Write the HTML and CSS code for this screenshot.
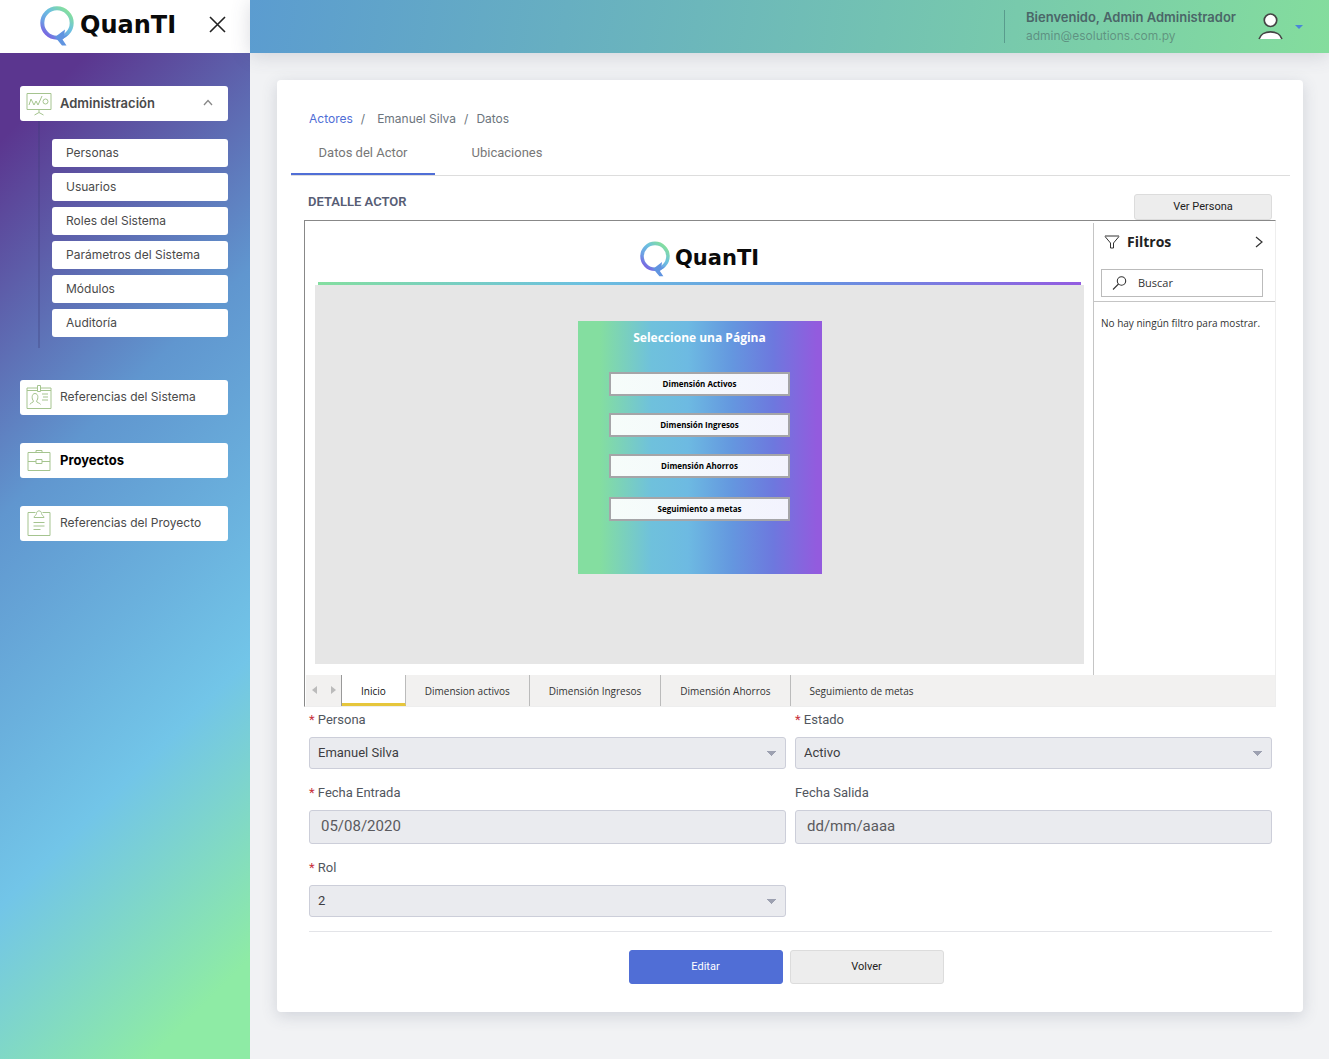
FILE: index.html
```html
<!DOCTYPE html>
<html lang="es">
<head>
<meta charset="utf-8">
<meta name="viewport" content="width=device-width, initial-scale=1">
<title>QuanTI - Datos del Actor</title>
<link rel="stylesheet" href="styles.css">
</head>
<body>
<svg class="defs" aria-hidden="true">
  <defs>
    <linearGradient id="ring" x1="0.1" y1="0.95" x2="0.85" y2="0.1">
      <stop offset="0" stop-color="#7a5be0"/>
      <stop offset="0.3" stop-color="#6c9fe4"/>
      <stop offset="0.65" stop-color="#6cc0e0"/>
      <stop offset="1" stop-color="#84dea0"/>
    </linearGradient>
    <symbol id="logo-q" viewBox="0 0 34 40">
      <circle cx="17" cy="17" r="14.7" fill="none" stroke="url(#ring)" stroke-width="4"/>
      <path d="M15 31 25 23.500 24 30 28.500 28.500 22.500 33.500 26.500 39.500 22 39.500Z" fill="#6094e0"/>
    </symbol>
  </defs>
</svg>
<div class="app">
  <aside class="sidebar">
    <div class="brand">
      <span class="logo"><svg class="logo-mark" aria-hidden="true"><use href="#logo-q"/></svg><span>QuanTI</span></span>
      <button class="close" type="button" aria-label="Cerrar menú">
        <svg width="17" height="17" viewBox="0 0 17 17" fill="none" stroke="#222" stroke-width="1.6"><path d="M1 1 16 16M16 1 1 16"/></svg>
      </button>
    </div>
    <nav class="menu" aria-label="Principal">
      <section class="group">
        <button class="item open" type="button" aria-expanded="true">
          <svg class="icon" viewBox="0 0 26 26"><path d="M1 3.500h24v16H1zM3 15 5 9l3 6 2-4 2 4 4-9M13 20v2.500M8.500 25l4.500-2.500L17.500 25"/><circle cx="19.500" cy="11.500" r="2.500"/></svg>
          <span>Administración</span>
          <svg class="chevron" width="10" height="7" viewBox="0 0 10 7" fill="none" stroke="#888" stroke-width="1.300"><path d="M1 6 5 1.500 9 6"/></svg>
        </button>
        <ul class="submenu">
          <li><a href="#">Personas</a></li>
          <li><a href="#">Usuarios</a></li>
          <li><a href="#">Roles del Sistema</a></li>
          <li><a href="#">Parámetros del Sistema</a></li>
          <li><a href="#">Módulos</a></li>
          <li><a href="#">Auditoría</a></li>
        </ul>
      </section>
      <a class="item" href="#">
        <svg class="icon" viewBox="0 0 26 26"><path d="M11.500 4H1v20.500h24V4H14.500M1 6.500h10.500M14.500 6.500H25M11.500 1.500h3v6h-3zM16 10h6M17 13h5M16 16h6M4 20.500c0-2 3.500-1.500 3.500-3.500C5.500 15 5.500 9.500 9 9.500s3.500 5.500 1.500 7.500c0 2 3.500 1.500 4 3.500"/></svg>
        <span>Referencias del Sistema</span>
      </a>
      <a class="item current" href="#" aria-current="page">
        <svg class="icon" viewBox="0 0 26 26"><path d="M2 5.500h22v18H2zM2 14.500h8M16 14.500h8M10 12.500h6v4h-6zM10 5.500v-2h6v2"/></svg>
        <span>Proyectos</span>
      </a>
      <a class="item" href="#">
        <svg class="icon" viewBox="0 0 26 26"><path d="M9.500 2.500H2v23h22v-23h-7.500M8 7.500c0-2 2.500-2 2.500-4C10.500 0 15.500 0 15.500 3.500c0 2 2.500 2 2.500 4zM7.500 12.500h11M7.500 16h11M7.500 19.500h7"/></svg>
        <span>Referencias del Proyecto</span>
      </a>
    </nav>
  </aside>
  <div class="page">
    <header class="topbar">
      <div class="user">
        <strong>Bienvenido, Admin Administrador</strong>
        <span>admin@esolutions.com.py</span>
      </div>
      <button class="account" type="button" aria-label="Cuenta">
        <svg width="25" height="27" viewBox="0 0 24 26" fill="#fff" stroke="#444" stroke-width="1.600"><circle cx="12" cy="7" r="6"/><path d="M1 25c2.500-9 19.500-9 22 0"/></svg>
        <svg width="8" height="4" viewBox="0 0 8 4" fill="#4a86d8"><path d="M0 0h8L4 4z"/></svg>
      </button>
    </header>
    <main class="card">
      <nav class="breadcrumb" aria-label="Ruta">
        <a href="#">Actores</a><span>/</span><span class="crumb">Emanuel Silva</span><span>/</span><span>Datos</span>
      </nav>
      <nav class="tabs" aria-label="Secciones">
        <a class="tab active" href="#">Datos del Actor</a>
        <a class="tab" href="#">Ubicaciones</a>
      </nav>
      <div class="title-row">
        <h1>DETALLE ACTOR</h1>
        <button class="btn small" type="button">Ver Persona</button>
      </div>
      <section class="report" aria-label="Informe">
        <div class="report-body">
          <div class="canvas">
            <div class="logo report-logo"><svg class="logo-mark" aria-hidden="true"><use href="#logo-q"/></svg><span>QuanTI</span></div>
            <div class="rainbow"></div>
            <div class="stage">
              <div class="picker">
                <h2>Seleccione una Página</h2>
                <button type="button">Dimensión Activos</button>
                <button type="button">Dimensión Ingresos</button>
                <button type="button">Dimensión Ahorros</button>
                <button type="button">Seguimiento a metas</button>
              </div>
            </div>
          </div>
          <aside class="filters">
            <div class="filters-head">
              <svg width="16" height="14" viewBox="0 0 16 14" fill="none" stroke="#333"><path d="M1 1h14M1 1.500 6.500 8v5h3V8L15 1.500"/></svg>
              <h2>Filtros</h2>
              <svg width="8" height="12" viewBox="0 0 8 12" fill="none" stroke="#333" stroke-width="1.200"><path d="M1 1l6 5-6 5"/></svg>
            </div>
            <label class="search">
              <svg width="15" height="14" viewBox="0 0 15 14" fill="none" stroke="#333" stroke-width="1.100"><circle cx="9.500" cy="5" r="4.200"/><path d="M6.500 8 1 13.500"/></svg>
              <input type="text" placeholder="Buscar" aria-label="Buscar">
            </label>
            <p>No hay ningún filtro para mostrar.</p>
          </aside>
        </div>
        <nav class="sheets" aria-label="Páginas del informe">
          <span class="arrows">
            <svg width="5" height="8" viewBox="0 0 5 8" fill="#bbb"><path d="M5 0v8L0 4z"/></svg>
            <svg width="5" height="8" viewBox="0 0 5 8" fill="#bbb"><path d="M0 0v8l5-4z"/></svg>
          </span>
          <a class="on" href="#">Inicio</a>
          <a href="#">Dimension activos</a>
          <a href="#">Dimensión Ingresos</a>
          <a href="#">Dimensión Ahorros</a>
          <a href="#">Seguimiento de metas</a>
        </nav>
      </section>
      <form class="form">
        <div class="field">
          <label for="persona"><i>*</i> Persona</label>
          <select id="persona"><option>Emanuel Silva</option></select>
        </div>
        <div class="field">
          <label for="estado"><i>*</i> Estado</label>
          <select id="estado"><option>Activo</option></select>
        </div>
        <div class="field">
          <label for="entrada"><i>*</i> Fecha Entrada</label>
          <input id="entrada" type="text" value="05/08/2020" readonly>
        </div>
        <div class="field">
          <label for="salida">Fecha Salida</label>
          <input id="salida" type="text" placeholder="dd/mm/aaaa" readonly>
        </div>
        <div class="field">
          <label for="rol"><i>*</i> Rol</label>
          <select id="rol"><option>2</option></select>
        </div>
        <div class="actions">
          <button class="btn primary" type="button">Editar</button>
          <button class="btn" type="button">Volver</button>
        </div>
      </form>
    </main>
  </div>
</div>
</body>
</html>
```
FILE: styles.css
```css
* { box-sizing: border-box; }
body { margin: 0; background: #f1f2f4; color: #444; font: 13px/20px Roboto, "Liberation Sans", sans-serif; }
button, input, select { font: inherit; color: inherit; margin: 0; }
button { padding: 0; cursor: pointer; }
a { color: inherit; text-decoration: none; }
h1, h2, p, ul { margin: 0; padding: 0; }
ul { list-style: none; }
svg { flex: none; }
.defs { position: absolute; width: 0; height: 0; }

.app { display: grid; grid-template-columns: 250px minmax(0, 1fr); min-height: 100vh; }

/* Sidebar */
.sidebar { display: flex; flex-direction: column; font-family: Inter, "Liberation Sans", sans-serif; }
.brand { display: flex; align-items: center; justify-content: space-between; height: 53px; padding: 0 24px 4px 40px; background: #fff; }
.logo { display: flex; align-items: center; gap: 6px; color: #0a0a0a; font: bold 24px/38px "DejaVu Sans", sans-serif; }
.logo > span { padding-bottom: 2px; }
.logo-mark { width: 34px; height: 40px; }
.brand .logo { padding-top: 2px; }
.close { display: flex; border: 0; background: none; }
.menu {
  flex: 1; display: flex; flex-direction: column; gap: 28px; padding: 33px 22px 33px 20px;
  background: linear-gradient(135deg, #5b368f 7%, #6096cf 37%, #72c5e8 68%, #8eeba5 92%);
}
.item {
  display: flex; align-items: center; gap: 8px; width: 100%; height: 35px; padding: 0 15px 2px 6px;
  border: 0; border-radius: 3px; background: #fff; color: #4a4a4a; text-align: left; font-size: 12px;
}
.open { font-size: 13px; font-weight: 600; }
.current { color: #000; font-size: 13px; font-weight: 700; }
.icon { width: 26px; height: 26px; fill: none; stroke: #a5c48f; stroke-width: 1; }
.chevron { margin-left: auto; }
.submenu { display: grid; gap: 6px; margin-left: 18px; padding: 18px 0 11px 12px; border-left: 2px solid rgba(60, 60, 120, .3); }
.submenu a { display: block; padding: 0 14px; border-radius: 3px; background: #fff; color: #4a4a4a; font-size: 12px; line-height: 28px; }
.group { margin-bottom: 4px; }

/* Top bar */
.topbar {
  display: flex; justify-content: flex-end; align-items: center; gap: 22px; height: 53px; padding: 0 26px;
  background: linear-gradient(100deg, #5b9cd0, #84dd9d); box-shadow: 0 2px 20px rgba(70, 75, 100, .2);
  font-family: Inter, "Liberation Sans", sans-serif; font-size: 12px;
}
.user { display: grid; padding-left: 21px; border-left: 1px solid rgba(60, 110, 110, .5); line-height: 14px; row-gap: 5px; color: rgba(60, 70, 80, .45); }
.user strong { color: #4b6668; font-size: 13px; line-height: 14px; font-weight: 600; }
.account { display: flex; align-items: center; gap: 12px; border: 0; background: none; }

/* Card */
.card { margin: 27px 26px 47px 27px; padding: 29px 13px 28px; border-radius: 4px; background: #fff; box-shadow: 0 4px 16px rgba(60, 70, 100, .18); }
.breadcrumb { display: flex; gap: 8px; padding-left: 19px; color: #6c757d; font: 12px/20px Inter, "Liberation Sans", sans-serif; }
.breadcrumb a { color: #506ed6; }
.crumb { margin-left: 4px; }
.tabs { display: flex; margin-left: 1px; border-bottom: 1px solid #ddd; }
.tab { width: 144px; padding: 14px 0 10px; text-align: center; color: #777; border-bottom: 2px solid transparent; }
.tab.active { border-color: #506ed6; }
.title-row { display: flex; justify-content: space-between; margin: 18px 18px 0; }
h1 { color: #575d75; font-size: 13px; line-height: 16px; font-weight: 600; }
.btn { width: 154px; height: 34px; border: 1px solid #dcdcdc; border-radius: 3px; background: #ededed; color: #222; font-size: 11px; }
.btn.small { width: 138px; height: 26px; }
.btn.primary { border-color: #506ed6; background: #506ed6; color: #fff; }

/* Embedded report */
.report {
  margin: 0 14px; border: 1px solid #eee; border-left-color: #888; border-top-color: #888;
  color: #333; font: 10px/16px "Open Sans", "Noto Sans", sans-serif;
}
.report-body { display: flex; }
.canvas { flex: 1; padding: 19px 9px 11px 10px; }
.report-logo { justify-content: center; font-size: 21px; line-height: 36px; gap: 5px; }
.report-logo .logo-mark { width: 30px; height: 36px; }
.rainbow { height: 3px; margin: 4px 3px 0; background: linear-gradient(90deg, #84dea0, #6cc0e0 35%, #6694e0 65%, #935ce0); }
.stage { display: flex; justify-content: center; padding: 36px 0 90px; background: #e6e6e6; }
.picker {
  display: flex; flex-direction: column; align-items: center; gap: 17px; width: 244px; height: 253px; padding-top: 8px;
  background: linear-gradient(90deg, #84dea0 9%, #6fc1dc 30%, #6dbae2 45%, #6497df 63%, #6d78de 80%, #935bde 98%);
}
.picker h2 { margin-bottom: 8px; color: #fff; font-size: 12px; line-height: 18px; }
.picker button {
  width: 181px; height: 24px; border: 2px solid #a5a5a8;
  background: linear-gradient(90deg, #f6fdfa, #f3f3fe); color: #000; font-size: 8px; line-height: 16px; font-weight: 700;
}
.picker button:last-child { margin-top: 2px; }
.filters { width: 182px; margin-top: 2px; border-left: 1px solid #c5c5c5; }
.filters-head { display: flex; align-items: center; gap: 7px; padding: 9px 12px 0 10px; }
.filters-head h2 { flex: 1; color: #222; font-size: 14px; line-height: 20px; }
.search { display: flex; align-items: center; gap: 11px; height: 28px; margin: 17px 12px 4px 7px; padding: 0 10px; border: 1px solid #bbb; }
.search input { width: 100%; min-width: 0; padding: 0; border: 0; outline: 0; background: none; font-size: 11px; }
input::placeholder { color: inherit; opacity: 1; }
.filters p { padding: 13px 0 0 7px; border-top: 1px solid #c5c5c5; white-space: nowrap; }
.sheets { display: flex; margin-left: 1px; background: #f2f1f0; }
.sheets a { padding: 8px 19px 7px; border-right: 1px solid #bbb; }
.sheets a:last-child { border-right: 0; }
.sheets .on { padding-bottom: 4px; border-bottom: 3px solid #e6c63c; background: #fff; color: #111; }
.arrows { display: flex; gap: 14px; padding: 11px 6px 0; border-right: 1px solid #999; width: 36px; }

/* Form */
.form { display: grid; grid-template-columns: 1fr 1fr; gap: 14px 9px; margin: 3px 18px 0 19px; }
.field { display: grid; gap: 7px; align-content: start; }
.field i { color: #c8323c; font-style: normal; }
.field label { color: #51565e; }
.field select, .field input { width: 100%; border: 1px solid #ccced9; border-radius: 3px; background-color: #eaebef; }
.field select {
  height: 32px; padding: 0 8px; appearance: none; color: #3d3d42;
  background-image: conic-gradient(from -42deg at 50% 100%, #9da1b1 84deg, transparent 0);
  background-size: 9px 5px; background-position: right 9px center; background-repeat: no-repeat;
}
.field input { height: 34px; padding: 0 11px 2px; color: #5a5a5e; font-size: 15px; }
.actions { grid-column: 1 / -1; display: flex; justify-content: center; gap: 7px; padding: 18px 9px 0 0; border-top: 1px solid #e3e4e8; }
```
